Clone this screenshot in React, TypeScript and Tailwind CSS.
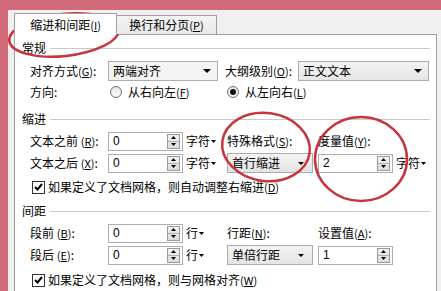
import React from "react";

const K = ({ k }: { k: string }) => (
  <span className="text-[11px]">
    (<span className="underline">{k}</span>)
  </span>
);

const Arrow = ({ w = 8 }: { w?: number }) => (
  <svg width={w} height={w / 2} viewBox="0 0 8 4" className="shrink-0">
    <path d="M0 0 L8 0 L4 4 Z" fill="#000" />
  </svg>
);

const SmallArrow = () => (
  <svg width="5" height="3" viewBox="0 0 5 3" className="shrink-0 ml-[1px]">
    <path d="M0 0 L5 0 L2.5 3 Z" fill="#000" />
  </svg>
);

const Select = ({ text, w, gray }: { text: string; w: string; gray?: boolean }) => (
  <div
    className={`${w} h-[20px] border border-[#acacac] flex items-center justify-between pl-[4px] pr-[6px] ${
      gray ? "bg-gradient-to-b from-[#f3f3f3] to-[#e6e6e6]" : "bg-[#f4f4f4]"
    }`}
  >
    <span className="leading-none">{text}</span>
    <Arrow />
  </div>
);

const Combo = ({ text }: { text: string }) => (
  <div className="w-[86px] h-[20px] border border-[#acacac] bg-gradient-to-b from-[#f4f4f4] to-[#e3e3e3] flex items-center justify-between pl-[4px] pr-[8px]">
    <span className="leading-none">{text}</span>
    <svg width="6" height="3" viewBox="0 0 6 3">
      <path d="M0 0 L6 0 L3 3 Z" fill="#000" />
    </svg>
  </div>
);

const Spin = ({ v }: { v: string }) => (
  <div className="w-[75px] h-[19px] border border-[#abadb3] bg-white flex items-center justify-between pl-[4px] pr-[2px]">
    <span className="leading-none text-[12px] font-['Liberation_Sans',sans-serif]">{v}</span>
    <div className="w-[13px] h-[15px] border border-[#9a9a9a] bg-gradient-to-b from-[#f2f2f2] to-[#dcdcdc] flex flex-col">
      <div className="flex-1 flex items-center justify-center border-b border-[#b0b0b0]">
        <svg width="5" height="3" viewBox="0 0 5 3">
          <path d="M0 3 L5 3 L2.5 0 Z" fill="#000" />
        </svg>
      </div>
      <div className="flex-1 flex items-center justify-center">
        <svg width="5" height="3" viewBox="0 0 5 3">
          <path d="M0 0 L5 0 L2.5 3 Z" fill="#000" />
        </svg>
      </div>
    </div>
  </div>
);

const Unit = ({ t }: { t: string }) => (
  <div className="flex items-center pl-[3px]">
    <span className="leading-none">{t}</span>
    <SmallArrow />
  </div>
);

const Section = ({ t, mt }: { t: string; mt: string }) => (
  <div className={`${mt} h-[14px] flex items-center pl-[7px] pr-[6px]`}>
    <span className="leading-none">{t}</span>
    <div className="flex-1 ml-[4px] h-px bg-[#c8c8c8]" />
  </div>
);

const Radio = ({ on }: { on?: boolean }) => (
  <div className="w-[12px] h-[12px] rounded-full border border-[#6f6f6f] bg-gradient-to-b from-[#e6e6e6] to-[#fafafa] flex items-center justify-center shrink-0">
    {on && <div className="w-[6px] h-[6px] rounded-full bg-[#111]" />}
  </div>
);

const Check = () => (
  <div className="w-[13px] h-[13px] border border-[#333] bg-white flex items-center justify-center shrink-0">
    <svg width="9" height="8" viewBox="0 0 9 8">
      <path d="M1 4 L3.5 6.5 L8 1" stroke="#000" strokeWidth="2" fill="none" />
    </svg>
  </div>
);

export default function App() {
  return (
    <div className="relative w-[441px] h-[291px] overflow-hidden bg-[#f0f0f0] text-[12px] text-black font-['Noto_Sans_CJK_SC','Microsoft_YaHei',sans-serif] whitespace-nowrap">
      <div className="h-[10px] bg-[#d26b79]" />
      <div className="flex h-[281px]">
        <div className="w-[8px] bg-[#d26b79]" />
        <div className="flex-1 pl-[6px] pt-[3px] pr-[4px] flex flex-col">
          {/* tabs */}
          <div className="flex items-end h-[21px] relative z-10">
            <div className="w-[103px] h-[22px] -mb-px border border-b-0 border-[#a0a0a0] bg-white flex items-center justify-center">
              <span className="leading-none">
                缩进和间距<K k="I" />
              </span>
            </div>
            <div className="w-[100px] h-[19px] border border-l-0 border-b-0 border-[#a0a0a0] bg-gradient-to-b from-[#f4f4f4] to-[#e8e8e8] flex items-center justify-center">
              <span className="leading-none">
                换行和分页<K k="P" />
              </span>
            </div>
          </div>
          {/* panel */}
          <div className="flex-1 border border-[#a0a0a0] bg-white flex flex-col">
            <Section t="常规" mt="mt-[6px]" />
            <div className="mt-[5px] h-[22px] flex items-center pl-[15px]">
              <div className="w-[78px]">
                对齐方式<K k="G" />:
              </div>
              <Select text="两端对齐" w="w-[110px]" />
              <div className="w-[80px] pl-[7px]">
                大纲级别<K k="O" />:
              </div>
              <Select text="正文文本" w="w-[131px]" gray />
            </div>
            <div className="h-[20px] flex items-center pl-[15px]">
              <div className="w-[78px]">方向:</div>
              <div className="w-[119px] flex items-center pl-[2px]">
                <Radio />
                <span className="ml-[6px]">
                  从右向左<K k="F" />
                </span>
              </div>
              <div className="flex items-center">
                <Radio on />
                <span className="ml-[6px]">
                  从左向右<K k="L" />
                </span>
              </div>
            </div>
            <Section t="缩进" mt="mt-[10px]" />
            <div className="mt-[4px] h-[22px] flex items-center pl-[15px]">
              <div className="w-[78px]">
                文本之前 <K k="R" />:
              </div>
              <Spin v="0" />
              <div className="w-[44px]">
                <Unit t="字符" />
              </div>
              <div className="w-[91px]">
                特殊格式<K k="S" />:
              </div>
              <div>
                度量值<K k="Y" />:
              </div>
            </div>
            <div className="h-[22px] flex items-center pl-[15px]">
              <div className="w-[78px]">
                文本之后 <K k="X" />:
              </div>
              <Spin v="0" />
              <div className="w-[44px]">
                <Unit t="字符" />
              </div>
              <div className="w-[91px]">
                <Combo text="首行缩进" />
              </div>
              <Spin v="2" />
              <Unit t="字符" />
            </div>
            <div className="mt-[2px] h-[22px] flex items-center pl-[17px]">
              <Check />
              <span className="ml-[3px]">
                如果定义了文档网格，则自动调整右缩进<K k="D" />
              </span>
            </div>
            <Section t="间距" mt="mt-[6px]" />
            <div className="mt-[4px] h-[22px] flex items-center pl-[15px]">
              <div className="w-[78px]">
                段前 <K k="B" />:
              </div>
              <Spin v="0" />
              <div className="w-[44px]">
                <Unit t="行" />
              </div>
              <div className="w-[91px]">
                行距<K k="N" />:
              </div>
              <div>
                设置值<K k="A" />:
              </div>
            </div>
            <div className="h-[22px] flex items-center pl-[15px]">
              <div className="w-[78px]">
                段后 <K k="E" />:
              </div>
              <Spin v="0" />
              <div className="w-[44px]">
                <Unit t="行" />
              </div>
              <div className="w-[91px]">
                <Combo text="单倍行距" />
              </div>
              <Spin v="1" />
            </div>
            <div className="mt-[3px] h-[22px] flex items-center pl-[17px]">
              <Check />
              <span className="ml-[3px]">
                如果定义了文档网格，则与网格对齐<K k="W" />
              </span>
            </div>
          </div>
        </div>
      </div>
      <svg
        className="absolute left-0 top-0 pointer-events-none"
        width="441"
        height="291"
        viewBox="0 0 441 291"
      >
        <ellipse cx="64" cy="35" rx="55" ry="21" transform="rotate(-6 64 35)" fill="none" stroke="#c8343d" strokeWidth="2.5" />
        <ellipse cx="266" cy="147" rx="44" ry="34" transform="rotate(8 266 147)" fill="none" stroke="#c8343d" strokeWidth="2.5" />
        <ellipse cx="361" cy="159" rx="46" ry="42" fill="none" stroke="#c8343d" strokeWidth="2.5" />
      </svg>
    </div>
  );
}
